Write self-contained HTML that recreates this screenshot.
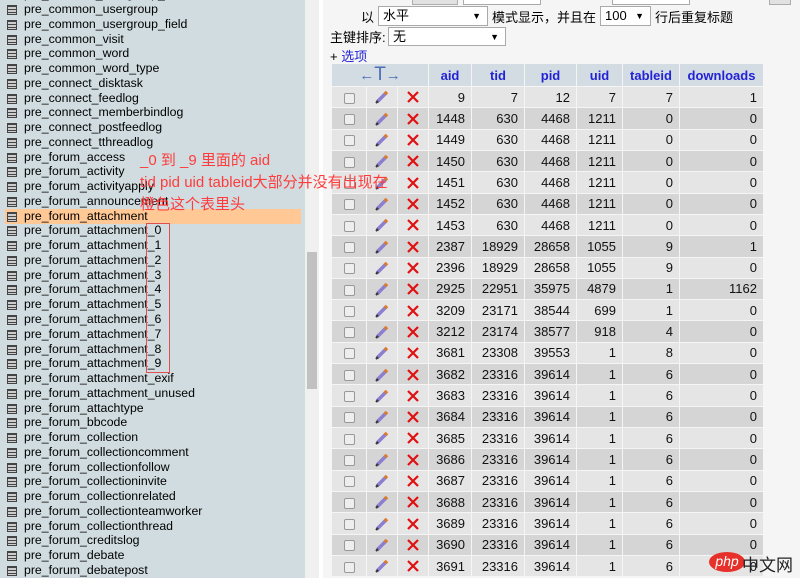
<!DOCTYPE html>
<html><head><meta charset="utf-8"><style>
*{margin:0;padding:0;box-sizing:border-box}
body{width:800px;height:578px;overflow:hidden;background:#f5f5f5;font-family:"Liberation Sans","Noto Sans CJK SC",sans-serif;font-size:12px;color:#000;position:relative}
#side{position:absolute;left:0;top:0;width:305px;height:578px;background:#d0dce0}
#sb{position:absolute;left:305px;top:0;width:14px;height:578px;background:#f0f0f0}
#thumb{position:absolute;left:307px;top:252px;width:10px;height:137px;background:#c1c1c1}
#white{position:absolute;left:319px;top:0;width:4px;height:578px;background:#fff}
.it{position:absolute;left:5px;height:15px;line-height:15px;width:296px;padding-left:19px;white-space:nowrap;font-size:12.3px}
.it:before{content:"";position:absolute;left:2px;top:3px;width:10px;height:10px;border:1px solid #444;background:repeating-linear-gradient(#444 0 1px,#ccc 1px 3px);box-sizing:border-box}
.hl{background:#ffc895}
.ann{position:absolute;left:140px;color:#ff3b3b;font-size:15px;white-space:nowrap;line-height:18px;z-index:5}
#box{position:absolute;left:146px;top:223px;width:24px;height:150px;border:1px solid #e05050}
.sel{position:absolute;background:#fff;border:1px solid #aaa;font-size:13px;padding-left:4px;line-height:18px}
.sel:after{content:"▼";position:absolute;right:6px;top:0;font-size:9px}
table{position:absolute;left:331px;top:63px;border-collapse:separate;border-spacing:1px;table-layout:fixed}
th{background:#d3dce3;color:#2323d6;font-weight:bold;font-size:13px;height:22px;text-align:center}
td{height:20.32px;text-align:right;padding-right:6px;font-size:13px;color:#111}
tr.o td{background:#e5e5e5}tr.e td{background:#d5d5d5}
td.c,td.p,td.x{text-align:center;padding:0}
.cb{display:inline-block;width:11px;height:11px;border:1px solid #999;border-radius:2px;background:#eee;vertical-align:middle}
td svg{vertical-align:middle}
</style></head><body>
<div id="side"></div>
<div id="sb"></div><div id="thumb"></div><div id="white"></div>
<svg width="0" height="0" style="position:absolute"><defs>
<symbol id="pen" viewBox="0 0 16 16"><path d="M3 13 L12 4" stroke="#8b7fd0" stroke-width="3.5" stroke-linecap="butt"/><path d="M11 5 L13 3" stroke="#e07a2a" stroke-width="3.5"/><path d="M2 14 L4 12" stroke="#333" stroke-width="2"/></symbol>
<symbol id="del" viewBox="0 0 16 16"><path d="M3 3 L13 13 M13 3 L3 13" stroke="#e01010" stroke-width="2.2"/></symbol>
</defs></svg>
<div class="it" style="top:-12.8px">pre_common_usergroup_f</div>
<div class="it" style="top:2px">pre_common_usergroup</div>
<div class="it" style="top:16.8px">pre_common_usergroup_field</div>
<div class="it" style="top:31.5px">pre_common_visit</div>
<div class="it" style="top:46.3px">pre_common_word</div>
<div class="it" style="top:61px">pre_common_word_type</div>
<div class="it" style="top:75.8px">pre_connect_disktask</div>
<div class="it" style="top:90.6px">pre_connect_feedlog</div>
<div class="it" style="top:105.3px">pre_connect_memberbindlog</div>
<div class="it" style="top:120.1px">pre_connect_postfeedlog</div>
<div class="it" style="top:134.8px">pre_connect_tthreadlog</div>
<div class="it" style="top:149.6px">pre_forum_access</div>
<div class="it" style="top:164.4px">pre_forum_activity</div>
<div class="it" style="top:179.1px">pre_forum_activityapply</div>
<div class="it" style="top:193.9px">pre_forum_announcement</div>
<div class="it hl" style="top:208.6px">pre_forum_attachment</div>
<div class="it" style="top:223.4px">pre_forum_attachment_0</div>
<div class="it" style="top:238.2px">pre_forum_attachment_1</div>
<div class="it" style="top:252.9px">pre_forum_attachment_2</div>
<div class="it" style="top:267.7px">pre_forum_attachment_3</div>
<div class="it" style="top:282.4px">pre_forum_attachment_4</div>
<div class="it" style="top:297.2px">pre_forum_attachment_5</div>
<div class="it" style="top:312px">pre_forum_attachment_6</div>
<div class="it" style="top:326.7px">pre_forum_attachment_7</div>
<div class="it" style="top:341.5px">pre_forum_attachment_8</div>
<div class="it" style="top:356.2px">pre_forum_attachment_9</div>
<div class="it" style="top:371px">pre_forum_attachment_exif</div>
<div class="it" style="top:385.8px">pre_forum_attachment_unused</div>
<div class="it" style="top:400.5px">pre_forum_attachtype</div>
<div class="it" style="top:415.3px">pre_forum_bbcode</div>
<div class="it" style="top:430px">pre_forum_collection</div>
<div class="it" style="top:444.8px">pre_forum_collectioncomment</div>
<div class="it" style="top:459.6px">pre_forum_collectionfollow</div>
<div class="it" style="top:474.3px">pre_forum_collectioninvite</div>
<div class="it" style="top:489.1px">pre_forum_collectionrelated</div>
<div class="it" style="top:503.8px">pre_forum_collectionteamworker</div>
<div class="it" style="top:518.6px">pre_forum_collectionthread</div>
<div class="it" style="top:533.4px">pre_forum_creditslog</div>
<div class="it" style="top:548.1px">pre_forum_debate</div>
<div class="it" style="top:562.9px">pre_forum_debatepost</div>
<div id="box"></div>

<div style="position:absolute;left:412px;top:-10px;width:46px;height:15px;background:#e1e1e1;border:1px solid #adadad"></div>
<div style="position:absolute;left:463px;top:-10px;width:78px;height:15px;background:#fff;border:1px solid #aaa"></div>
<div style="position:absolute;left:612px;top:-10px;width:78px;height:15px;background:#fff;border:1px solid #aaa"></div>
<div style="position:absolute;left:769px;top:-10px;width:22px;height:15px;background:#e1e1e1;border:1px solid #adadad"></div>
<div style="position:absolute;left:361px;top:7px;font-size:13px">以</div>
<div class="sel" style="left:378px;top:6px;width:110px;height:20px">水平</div>
<div style="position:absolute;left:492px;top:7px;font-size:13px">模式显示，并且在</div>
<div class="sel" style="left:600px;top:6px;width:51px;height:20px;font-size:13px">100</div>
<div style="position:absolute;left:655px;top:7px;font-size:13px">行后重复标题</div>
<div style="position:absolute;left:330px;top:27px;font-size:13px">主键排序:</div>
<div class="sel" style="left:388px;top:27px;width:118px;height:19px">无</div>
<div style="position:absolute;left:330px;top:46px;font-size:13px">+ <span style="color:#2323d6">选项</span></div>

<table>
<colgroup><col style="width:34px"><col style="width:30px"><col style="width:30px"><col style="width:42px"><col style="width:52px"><col style="width:51px"><col style="width:45px"><col style="width:56px"><col style="width:83px"></colgroup>
<tr><th colspan="3" style="color:#4a6fb5;font-weight:normal;font-size:15px">←<span style="font-size:19px">T</span>→</th><th>aid</th><th>tid</th><th>pid</th><th>uid</th><th>tableid</th><th>downloads</th></tr>
<tr class="o"><td class="c"><i class="cb"></i></td><td class="p"><svg width="16" height="16"><use href="#pen"/></svg></td><td class="x"><svg width="16" height="16"><use href="#del"/></svg></td><td>9</td><td>7</td><td>12</td><td>7</td><td>7</td><td>1</td></tr>
<tr class="e"><td class="c"><i class="cb"></i></td><td class="p"><svg width="16" height="16"><use href="#pen"/></svg></td><td class="x"><svg width="16" height="16"><use href="#del"/></svg></td><td>1448</td><td>630</td><td>4468</td><td>1211</td><td>0</td><td>0</td></tr>
<tr class="o"><td class="c"><i class="cb"></i></td><td class="p"><svg width="16" height="16"><use href="#pen"/></svg></td><td class="x"><svg width="16" height="16"><use href="#del"/></svg></td><td>1449</td><td>630</td><td>4468</td><td>1211</td><td>0</td><td>0</td></tr>
<tr class="e"><td class="c"><i class="cb"></i></td><td class="p"><svg width="16" height="16"><use href="#pen"/></svg></td><td class="x"><svg width="16" height="16"><use href="#del"/></svg></td><td>1450</td><td>630</td><td>4468</td><td>1211</td><td>0</td><td>0</td></tr>
<tr class="o"><td class="c"><i class="cb"></i></td><td class="p"><svg width="16" height="16"><use href="#pen"/></svg></td><td class="x"><svg width="16" height="16"><use href="#del"/></svg></td><td>1451</td><td>630</td><td>4468</td><td>1211</td><td>0</td><td>0</td></tr>
<tr class="e"><td class="c"><i class="cb"></i></td><td class="p"><svg width="16" height="16"><use href="#pen"/></svg></td><td class="x"><svg width="16" height="16"><use href="#del"/></svg></td><td>1452</td><td>630</td><td>4468</td><td>1211</td><td>0</td><td>0</td></tr>
<tr class="o"><td class="c"><i class="cb"></i></td><td class="p"><svg width="16" height="16"><use href="#pen"/></svg></td><td class="x"><svg width="16" height="16"><use href="#del"/></svg></td><td>1453</td><td>630</td><td>4468</td><td>1211</td><td>0</td><td>0</td></tr>
<tr class="e"><td class="c"><i class="cb"></i></td><td class="p"><svg width="16" height="16"><use href="#pen"/></svg></td><td class="x"><svg width="16" height="16"><use href="#del"/></svg></td><td>2387</td><td>18929</td><td>28658</td><td>1055</td><td>9</td><td>1</td></tr>
<tr class="o"><td class="c"><i class="cb"></i></td><td class="p"><svg width="16" height="16"><use href="#pen"/></svg></td><td class="x"><svg width="16" height="16"><use href="#del"/></svg></td><td>2396</td><td>18929</td><td>28658</td><td>1055</td><td>9</td><td>0</td></tr>
<tr class="e"><td class="c"><i class="cb"></i></td><td class="p"><svg width="16" height="16"><use href="#pen"/></svg></td><td class="x"><svg width="16" height="16"><use href="#del"/></svg></td><td>2925</td><td>22951</td><td>35975</td><td>4879</td><td>1</td><td>1162</td></tr>
<tr class="o"><td class="c"><i class="cb"></i></td><td class="p"><svg width="16" height="16"><use href="#pen"/></svg></td><td class="x"><svg width="16" height="16"><use href="#del"/></svg></td><td>3209</td><td>23171</td><td>38544</td><td>699</td><td>1</td><td>0</td></tr>
<tr class="e"><td class="c"><i class="cb"></i></td><td class="p"><svg width="16" height="16"><use href="#pen"/></svg></td><td class="x"><svg width="16" height="16"><use href="#del"/></svg></td><td>3212</td><td>23174</td><td>38577</td><td>918</td><td>4</td><td>0</td></tr>
<tr class="o"><td class="c"><i class="cb"></i></td><td class="p"><svg width="16" height="16"><use href="#pen"/></svg></td><td class="x"><svg width="16" height="16"><use href="#del"/></svg></td><td>3681</td><td>23308</td><td>39553</td><td>1</td><td>8</td><td>0</td></tr>
<tr class="e"><td class="c"><i class="cb"></i></td><td class="p"><svg width="16" height="16"><use href="#pen"/></svg></td><td class="x"><svg width="16" height="16"><use href="#del"/></svg></td><td>3682</td><td>23316</td><td>39614</td><td>1</td><td>6</td><td>0</td></tr>
<tr class="o"><td class="c"><i class="cb"></i></td><td class="p"><svg width="16" height="16"><use href="#pen"/></svg></td><td class="x"><svg width="16" height="16"><use href="#del"/></svg></td><td>3683</td><td>23316</td><td>39614</td><td>1</td><td>6</td><td>0</td></tr>
<tr class="e"><td class="c"><i class="cb"></i></td><td class="p"><svg width="16" height="16"><use href="#pen"/></svg></td><td class="x"><svg width="16" height="16"><use href="#del"/></svg></td><td>3684</td><td>23316</td><td>39614</td><td>1</td><td>6</td><td>0</td></tr>
<tr class="o"><td class="c"><i class="cb"></i></td><td class="p"><svg width="16" height="16"><use href="#pen"/></svg></td><td class="x"><svg width="16" height="16"><use href="#del"/></svg></td><td>3685</td><td>23316</td><td>39614</td><td>1</td><td>6</td><td>0</td></tr>
<tr class="e"><td class="c"><i class="cb"></i></td><td class="p"><svg width="16" height="16"><use href="#pen"/></svg></td><td class="x"><svg width="16" height="16"><use href="#del"/></svg></td><td>3686</td><td>23316</td><td>39614</td><td>1</td><td>6</td><td>0</td></tr>
<tr class="o"><td class="c"><i class="cb"></i></td><td class="p"><svg width="16" height="16"><use href="#pen"/></svg></td><td class="x"><svg width="16" height="16"><use href="#del"/></svg></td><td>3687</td><td>23316</td><td>39614</td><td>1</td><td>6</td><td>0</td></tr>
<tr class="e"><td class="c"><i class="cb"></i></td><td class="p"><svg width="16" height="16"><use href="#pen"/></svg></td><td class="x"><svg width="16" height="16"><use href="#del"/></svg></td><td>3688</td><td>23316</td><td>39614</td><td>1</td><td>6</td><td>0</td></tr>
<tr class="o"><td class="c"><i class="cb"></i></td><td class="p"><svg width="16" height="16"><use href="#pen"/></svg></td><td class="x"><svg width="16" height="16"><use href="#del"/></svg></td><td>3689</td><td>23316</td><td>39614</td><td>1</td><td>6</td><td>0</td></tr>
<tr class="e"><td class="c"><i class="cb"></i></td><td class="p"><svg width="16" height="16"><use href="#pen"/></svg></td><td class="x"><svg width="16" height="16"><use href="#del"/></svg></td><td>3690</td><td>23316</td><td>39614</td><td>1</td><td>6</td><td>0</td></tr>
<tr class="o"><td class="c"><i class="cb"></i></td><td class="p"><svg width="16" height="16"><use href="#pen"/></svg></td><td class="x"><svg width="16" height="16"><use href="#del"/></svg></td><td>3691</td><td>23316</td><td>39614</td><td>1</td><td>6</td><td>0</td></tr>
</table>
<div class="ann" style="top:152px">_0 到 _9 里面的 aid</div>
<div class="ann" style="top:174px">tid pid uid tableid大部分并没有出现在</div>
<div class="ann" style="top:196px">橙色这个表里头</div>
<div style="position:absolute;left:709px;top:552px;width:36px;height:20px;border-radius:50%;background:#e8302a;color:#fff;font-size:14px;line-height:19px;text-align:center;font-style:italic;z-index:6">php</div>
<div style="position:absolute;left:742px;top:551px;font-size:17px;color:#222;z-index:6">中文网</div>
</body></html>
